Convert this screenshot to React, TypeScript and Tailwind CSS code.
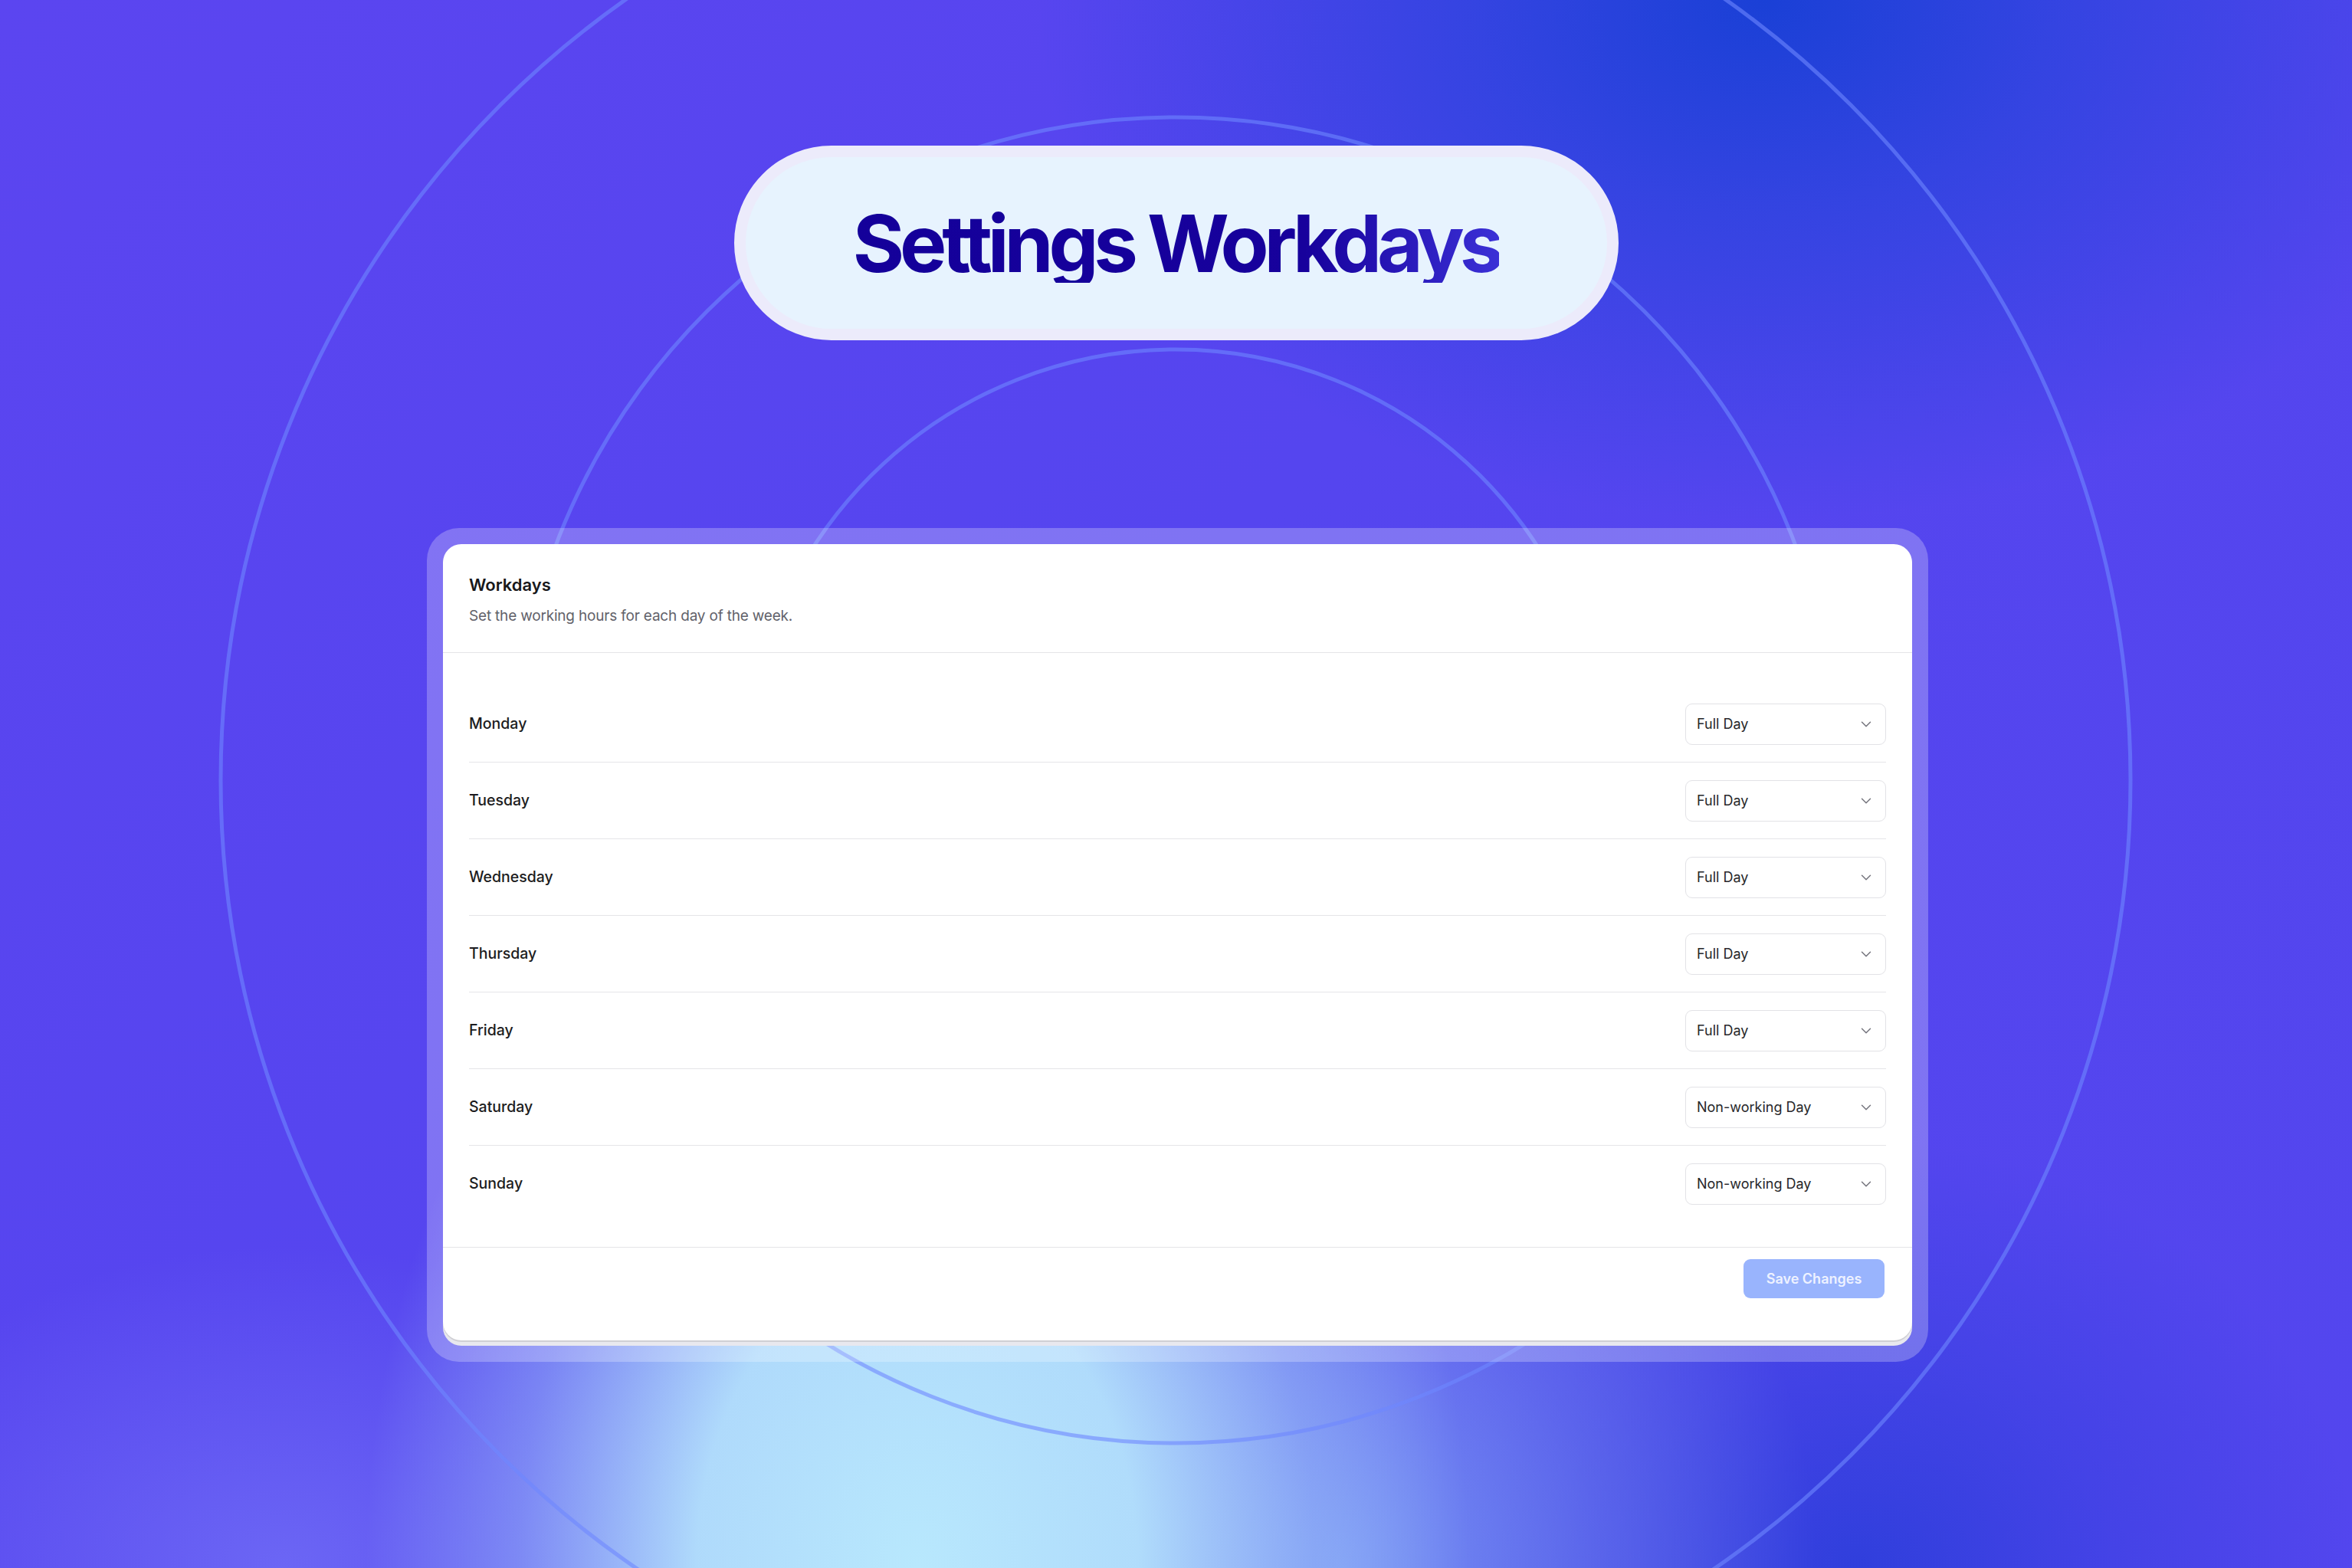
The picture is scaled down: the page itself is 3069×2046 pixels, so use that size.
import { ChevronDown } from 'lucide-react';

const DAYS = [
  { name: 'Monday', value: 'Full Day' },
  { name: 'Tuesday', value: 'Full Day' },
  { name: 'Wednesday', value: 'Full Day' },
  { name: 'Thursday', value: 'Full Day' },
  { name: 'Friday', value: 'Full Day' },
  { name: 'Saturday', value: 'Non-working Day' },
  { name: 'Sunday', value: 'Non-working Day' },
];

function Backdrop() {
  return (
    <div className="pointer-events-none absolute inset-0">
      <div className="absolute inset-0 bg-[linear-gradient(135deg,#5b45f0_0%,#5545ef_45%,#5346ee_100%)]" />
      <div className="absolute inset-0 bg-[radial-gradient(ellipse_950px_680px_at_75%_0%,#1a40d6_0%,rgba(30,67,216,0.6)_40%,rgba(30,67,216,0)_100%)]" />
      <div className="absolute inset-0 bg-[radial-gradient(ellipse_650px_560px_at_79%_100%,rgba(44,62,218,0.9)_0%,rgba(44,62,218,0.4)_50%,rgba(44,62,218,0)_100%)]" />
      <div className="absolute inset-0 bg-[radial-gradient(ellipse_600px_420px_at_12%_100%,rgba(130,135,250,0.5)_0%,rgba(130,135,250,0)_100%)]" />
      <div className="absolute inset-0 bg-[radial-gradient(ellipse_620px_700px_at_57%_100%,rgba(130,170,245,0.8)_0%,rgba(120,150,240,0.4)_55%,rgba(110,130,240,0)_100%)]" />
      <div className="absolute inset-0 bg-[radial-gradient(ellipse_720px_1000px_at_39%_100%,#b8e8fd_0%,rgba(180,226,252,0.95)_40%,rgba(155,190,248,0.5)_72%,rgba(120,140,245,0)_100%)]" />
      <svg className="absolute inset-0" width="3069" height="2046" viewBox="0 0 3069 2046">
        <g fill="none" stroke="rgba(110,135,255,0.6)" strokeWidth="5">
          <circle cx="1534" cy="1018" r="562" />
          <circle cx="1534" cy="1018" r="865" />
          <circle cx="1534" cy="1018" r="1246" />
        </g>
      </svg>
    </div>
  );
}

function DaySelect({ value }: { value: string }) {
  return (
    <div className="flex h-[54px] w-[262px] items-center justify-between rounded-[9px] border border-[#e2e2e6] bg-white pl-[14px] pr-[14px] text-[18px] text-[#27272a]">
      <span>{value}</span>
      <ChevronDown size={22} strokeWidth={1.6} className="text-[#75757d]" />
    </div>
  );
}

export default function App() {
  return (
    <div className="relative h-[2046px] w-[3069px] overflow-hidden">
      <Backdrop />
      <div className="relative flex flex-col items-center">
        <div className="mt-[190px] flex h-[254px] w-[1154px] items-center justify-center rounded-full border-[15px] border-[#ecebfb] bg-[#e7f3fe]">
          <h1 className="bg-[linear-gradient(90deg,#14009a_0%,#17019c_70%,#3b30d6_100%)] bg-clip-text font-['Inter',sans-serif] text-[103px] leading-none font-bold tracking-[-0.06em] text-transparent">
            Settings Workdays
          </h1>
        </div>

        <div className="mt-[245px] ml-[4px] w-[1959px] rounded-[42px] bg-white/25 px-[21px] pt-[21px] pb-[28px]">
          <div className="rounded-[24px] bg-white font-['Inter',sans-serif] shadow-[0_2px_0_#cfcfd4,0_7px_0_#e8e8ee]">
            <div className="border-b border-[#e5e5e8] px-[34px] pt-[38px] pb-[33px]">
              <h2 className="text-[22px] leading-[30px] font-semibold text-[#18181b]">Workdays</h2>
              <p className="mt-3 text-[19px] leading-[28px] tracking-[-0.01em] text-[#62626a]">
                Set the working hours for each day of the week.
              </p>
            </div>

            <div className="px-[34px] pt-[43px] pb-[33px]">
              {DAYS.map((day, i) => (
                <div
                  key={day.name}
                  className={
                    i < DAYS.length - 1
                      ? 'flex items-center justify-between border-b border-[#e5e5e8] py-[22.5px]'
                      : 'flex items-center justify-between py-[22.5px]'
                  }
                >
                  <span className="text-[19.5px] font-medium text-[#1c1c20]">{day.name}</span>
                  <DaySelect value={day.value} />
                </div>
              ))}
            </div>

            <div className="flex justify-end border-t border-[#e5e5e8] px-[36px] pt-[15px] pb-[55px]">
              <button className="h-[51px] w-[184px] rounded-[9px] bg-[#99b4fd] text-[18px] font-semibold text-[#eef2ff]">
                Save Changes
              </button>
            </div>
          </div>
        </div>
      </div>
    </div>
  );
}
